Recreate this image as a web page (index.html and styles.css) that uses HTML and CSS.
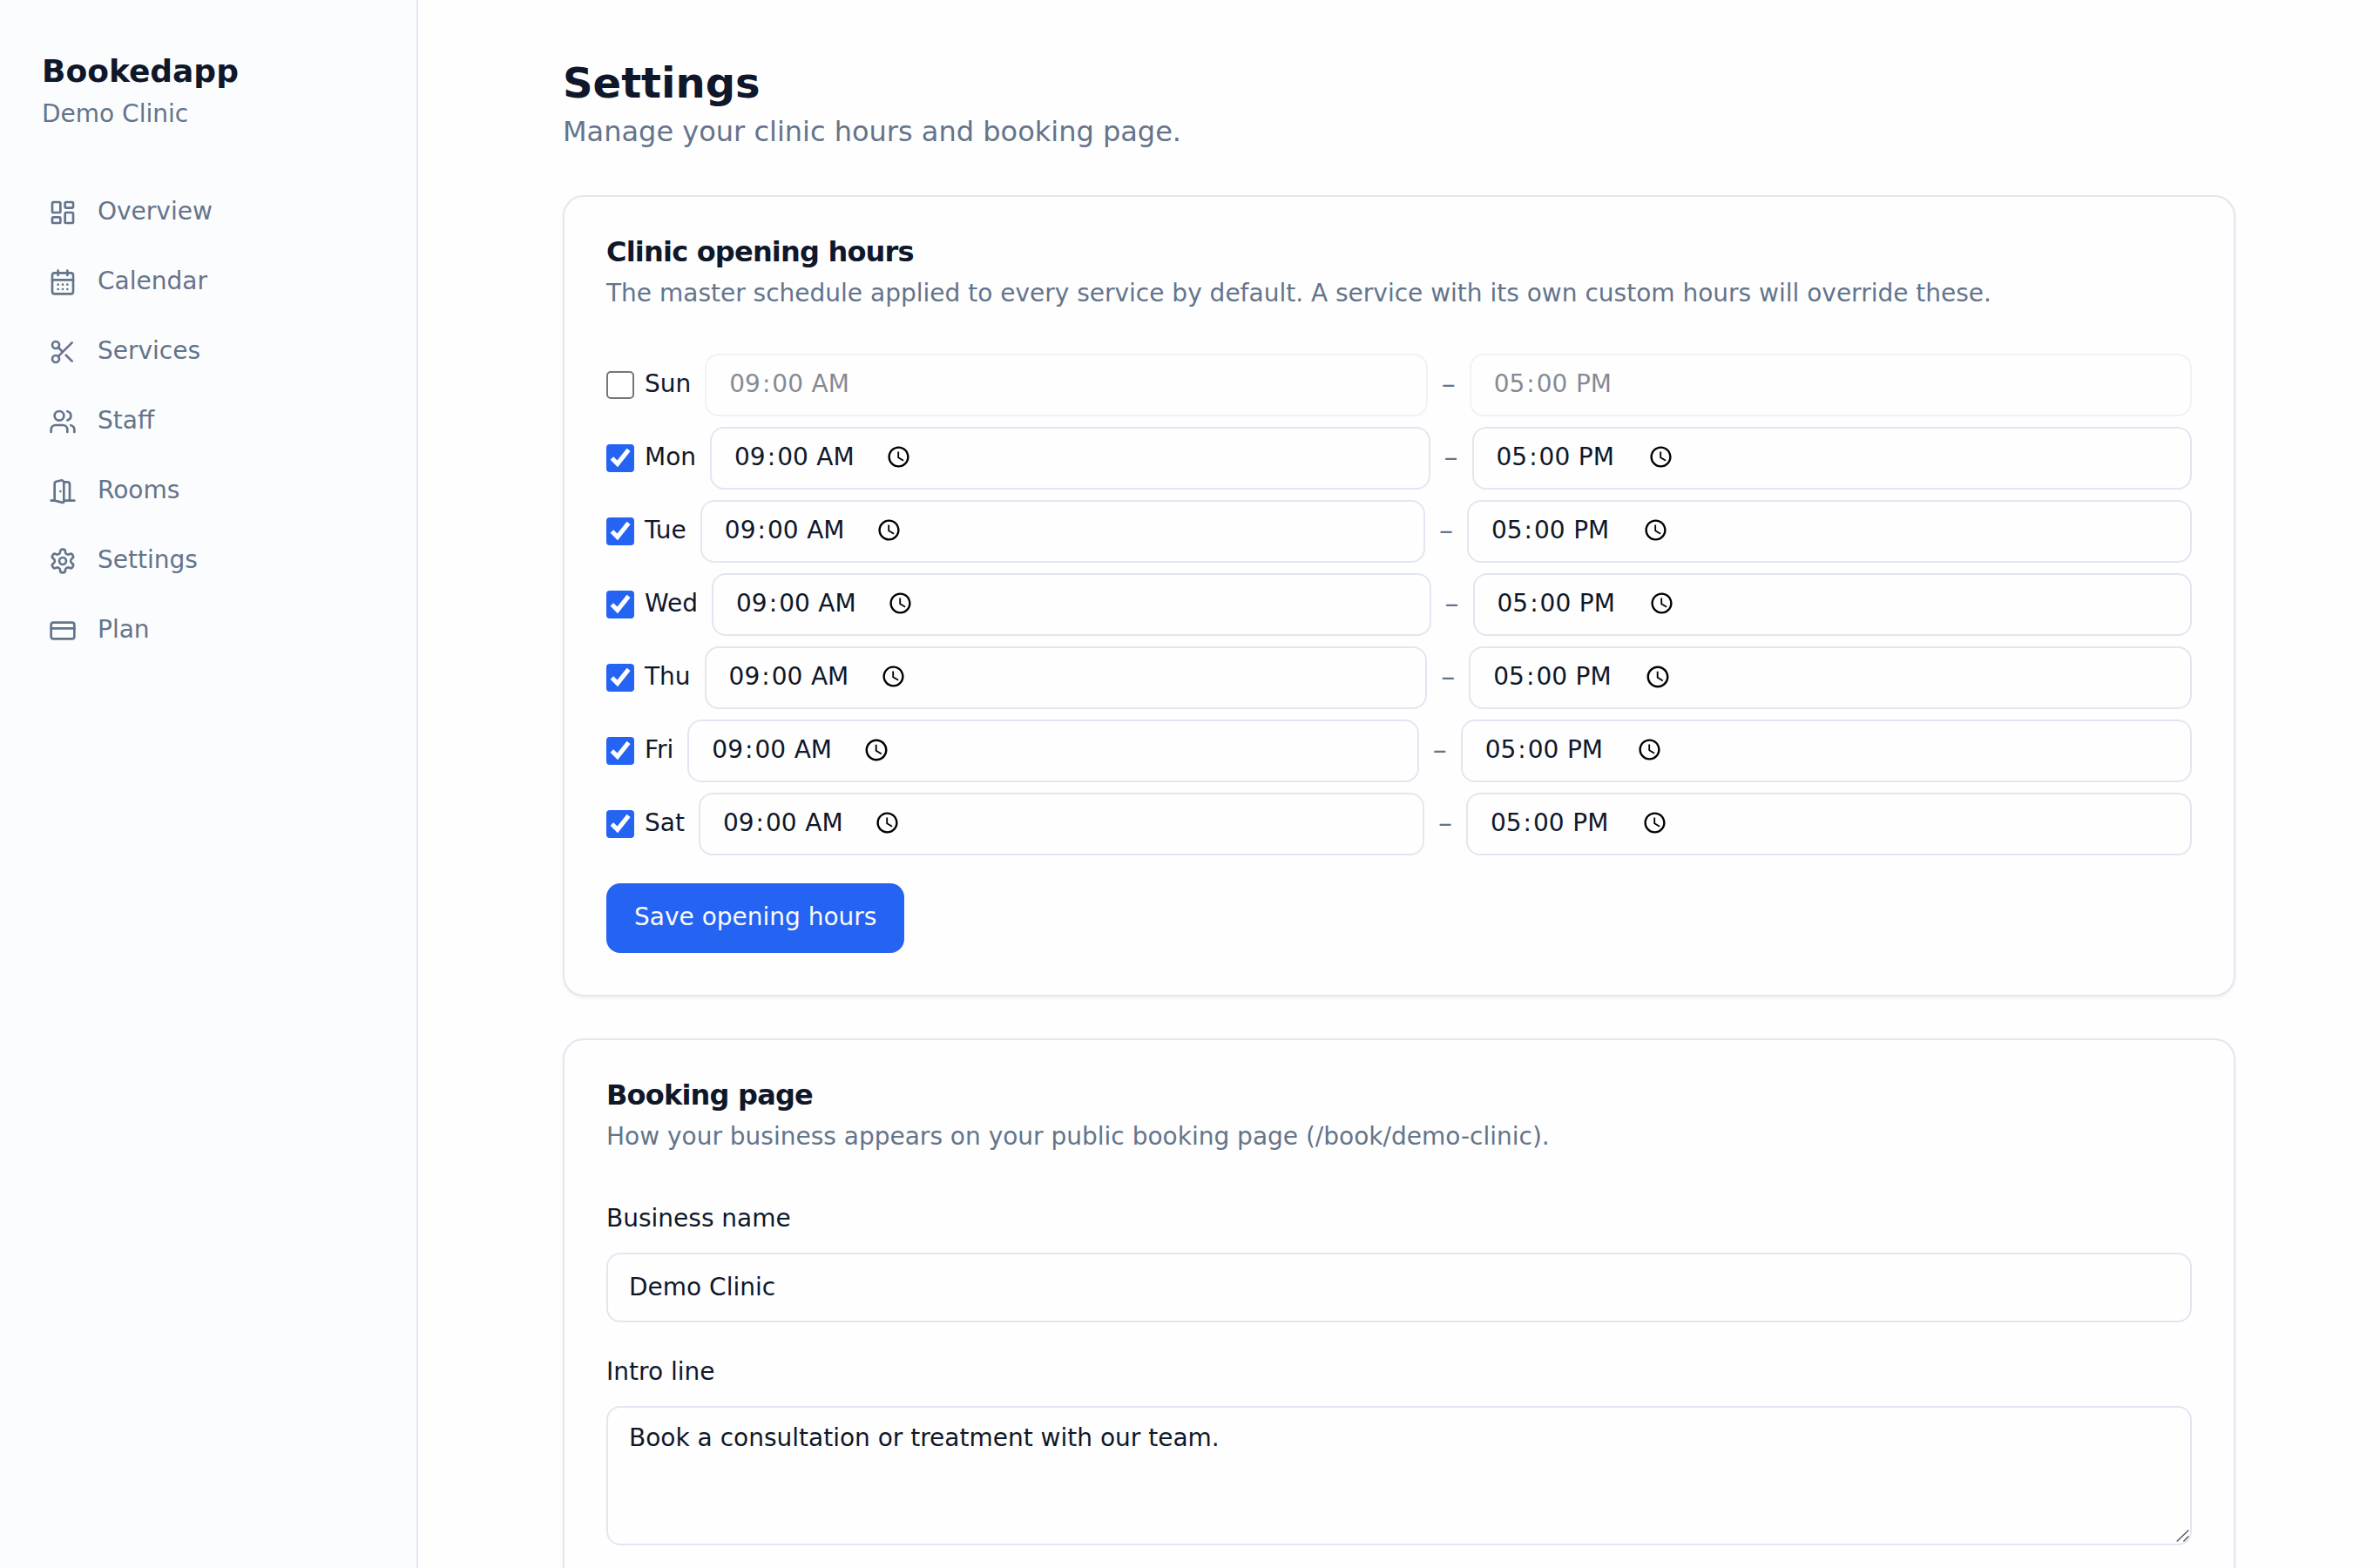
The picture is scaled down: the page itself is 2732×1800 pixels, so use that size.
FILE: index.html
```html
<!DOCTYPE html>
<html lang="en">
<head>
  <meta charset="UTF-8"/>
  <meta name="viewport" content="width=device-width, initial-scale=1.0"/>
  <title>Settings - Bookedapp</title>
  <link rel="stylesheet" href="styles.css">
</head>
<body>
  <aside class="sidebar">
    <div class="brand">
      <div class="brand-name">Bookedapp</div>
      <div class="brand-clinic">Demo Clinic</div>
    </div>
    <nav class="nav">
      <a class="nav-link" href="#">
        <svg class="icon" viewBox="0 0 24 24"><rect width="7" height="9" x="3" y="3" rx="1"/><rect width="7" height="5" x="14" y="3" rx="1"/><rect width="7" height="9" x="14" y="12" rx="1"/><rect width="7" height="5" x="3" y="16" rx="1"/></svg>
        <span>Overview</span>
      </a>
      <a class="nav-link" href="#">
        <svg class="icon" viewBox="0 0 24 24"><path d="M8 2v4M16 2v4"/><rect width="18" height="18" x="3" y="4" rx="2"/><path d="M3 10h18M8 14h.01M12 14h.01M16 14h.01M8 18h.01M12 18h.01M16 18h.01"/></svg>
        <span>Calendar</span>
      </a>
      <a class="nav-link" href="#">
        <svg class="icon" viewBox="0 0 24 24"><circle cx="6" cy="6" r="3"/><path d="M8.12 8.12 12 12M20 4 8.12 15.88"/><circle cx="6" cy="18" r="3"/><path d="M14.8 14.8 20 20"/></svg>
        <span>Services</span>
      </a>
      <a class="nav-link" href="#">
        <svg class="icon" viewBox="0 0 24 24"><path d="M16 21v-2a4 4 0 0 0-4-4H6a4 4 0 0 0-4 4v2"/><circle cx="9" cy="7" r="4"/><path d="M22 21v-2a4 4 0 0 0-3-3.87M16 3.13a4 4 0 0 1 0 7.75"/></svg>
        <span>Staff</span>
      </a>
      <a class="nav-link" href="#">
        <svg class="icon" viewBox="0 0 24 24"><path d="M13 4h3a2 2 0 0 1 2 2v14M2 20h3M13 20h9M10 12v.01"/><path d="M13 4.562v16.157a1 1 0 0 1-1.242.97L5 20V5.562a2 2 0 0 1 1.515-1.94l4-1A2 2 0 0 1 13 4.561Z"/></svg>
        <span>Rooms</span>
      </a>
      <a class="nav-link" href="#">
        <svg class="icon" viewBox="0 0 24 24"><path d="M12.22 2h-.44a2 2 0 0 0-2 2v.18a2 2 0 0 1-1 1.73l-.43.25a2 2 0 0 1-2 0l-.15-.08a2 2 0 0 0-2.73.73l-.22.38a2 2 0 0 0 .73 2.73l.15.1a2 2 0 0 1 1 1.72v.51a2 2 0 0 1-1 1.74l-.15.09a2 2 0 0 0-.73 2.73l.22.38a2 2 0 0 0 2.73.73l.15-.08a2 2 0 0 1 2 0l.43.25a2 2 0 0 1 1 1.73V20a2 2 0 0 0 2 2h.44a2 2 0 0 0 2-2v-.18a2 2 0 0 1 1-1.73l.43-.25a2 2 0 0 1 2 0l.15.08a2 2 0 0 0 2.73-.73l.22-.39a2 2 0 0 0-.73-2.73l-.15-.08a2 2 0 0 1-1-1.74v-.5a2 2 0 0 1 1-1.74l.15-.09a2 2 0 0 0 .73-2.73l-.22-.38a2 2 0 0 0-2.73-.73l-.15.08a2 2 0 0 1-2 0l-.43-.25a2 2 0 0 1-1-1.73V4a2 2 0 0 0-2-2z"/><circle cx="12" cy="12" r="3"/></svg>
        <span>Settings</span>
      </a>
      <a class="nav-link" href="#">
        <svg class="icon" viewBox="0 0 24 24"><rect width="20" height="14" x="2" y="5" rx="2"/><path d="M2 10h20"/></svg>
        <span>Plan</span>
      </a>
    </nav>
  </aside>

  <main>
    <div class="content">
      <div class="page-head">
        <h1>Settings</h1>
        <p>Manage your clinic hours and booking page.</p>
      </div>

      <section class="card">
        <div class="card-head">
          <h2>Clinic opening hours</h2>
          <p>The master schedule applied to every service by default. A service with its own custom hours will override these.</p>
        </div>
        <div class="hours">
          <div class="hours-row">
            <label class="day"><input type="checkbox"><span>Sun</span></label>
            <input class="input time" type="time" value="09:00" disabled>
            <span class="dash">–</span>
            <input class="input time" type="time" value="17:00" disabled>
          </div>
          <div class="hours-row">
            <label class="day"><input type="checkbox" checked><span>Mon</span></label>
            <input class="input time" type="time" value="09:00">
            <span class="dash">–</span>
            <input class="input time" type="time" value="17:00">
          </div>
          <div class="hours-row">
            <label class="day"><input type="checkbox" checked><span>Tue</span></label>
            <input class="input time" type="time" value="09:00">
            <span class="dash">–</span>
            <input class="input time" type="time" value="17:00">
          </div>
          <div class="hours-row">
            <label class="day"><input type="checkbox" checked><span>Wed</span></label>
            <input class="input time" type="time" value="09:00">
            <span class="dash">–</span>
            <input class="input time" type="time" value="17:00">
          </div>
          <div class="hours-row">
            <label class="day"><input type="checkbox" checked><span>Thu</span></label>
            <input class="input time" type="time" value="09:00">
            <span class="dash">–</span>
            <input class="input time" type="time" value="17:00">
          </div>
          <div class="hours-row">
            <label class="day"><input type="checkbox" checked><span>Fri</span></label>
            <input class="input time" type="time" value="09:00">
            <span class="dash">–</span>
            <input class="input time" type="time" value="17:00">
          </div>
          <div class="hours-row">
            <label class="day"><input type="checkbox" checked><span>Sat</span></label>
            <input class="input time" type="time" value="09:00">
            <span class="dash">–</span>
            <input class="input time" type="time" value="17:00">
          </div>
        </div>
        <button class="button" type="button">Save opening hours</button>
      </section>

      <section class="card">
        <div class="card-head">
          <h2>Booking page</h2>
          <p>How your business appears on your public booking page (/book/demo-clinic).</p>
        </div>
        <div class="field">
          <label for="name">Business name</label>
          <input class="input" id="name" type="text" value="Demo Clinic">
        </div>
        <div class="field">
          <label for="intro">Intro line</label>
          <div class="textarea-wrap">
            <textarea class="input" id="intro">Book a consultation or treatment with our team.</textarea>
            <svg class="grip" viewBox="0 0 10 10"><path d="M1.4 7.7 8.2 1.2M5.2 7.7 8.2 4.8"/></svg>
          </div>
        </div>
      </section>
    </div>
  </main>
</body>
</html>
```
FILE: styles.css
```css
:root {
  --bg: #fefefe;
  --sidebar: #fbfcfe;
  --text: #0f172a;
  --muted: #64748b;
  --border: #e1e7f0;
  --primary: #2563f3;
}

* {
  margin: 0;
  padding: 0;
  box-sizing: border-box;
}

html {
  zoom: 2;
}

body {
  display: flex;
  height: 900px;
  overflow: hidden;
  font-family: 'DejaVu Sans', sans-serif;
  font-size: 16px;
  line-height: 24px;
  background: var(--bg);
  color: var(--text);
}

.sidebar {
  flex-shrink: 0;
  width: 240px;
  padding: 28px 16px;
  background: var(--sidebar);
  border-right: 1px solid var(--border);
}

.brand {
  padding: 0 8px;
  margin-bottom: 29px;
}

.brand-name {
  font-size: 18px;
  line-height: 26px;
  padding-bottom: 2px;
  font-weight: 700;
}

.brand-clinic {
  font-size: 14px;
  line-height: 19px;
  color: var(--muted);
}

.nav {
  display: flex;
  flex-direction: column;
  gap: 4px;
}

.nav-link {
  display: flex;
  align-items: center;
  gap: 12px;
  height: 36px;
  padding: 0 12px;
  font-size: 14px;
  line-height: 20px;
  color: var(--muted);
  text-decoration: none;
}

.nav-link span {
  padding-bottom: 1px;
}

.icon {
  width: 16px;
  height: 16px;
  fill: none;
  stroke: currentColor;
  stroke-width: 2;
  stroke-linecap: round;
  stroke-linejoin: round;
}

main {
  flex: 1;
  padding: 32px;
}

.content {
  max-width: 960px;
  margin: 0 auto;
  display: flex;
  flex-direction: column;
  gap: 24px;
}

h1 {
  font-size: 24px;
  line-height: 31px;
  padding-bottom: 1px;
  font-weight: 700;
}

.page-head p {
  line-height: 23px;
  padding-bottom: 1px;
  color: var(--muted);
}

.card {
  padding: 24px;
  background: var(--bg);
  border: 1px solid var(--border);
  border-radius: 12px;
  box-shadow: 0 1px 2px rgba(0, 0, 0, 0.05);
}

.card-head {
  display: flex;
  flex-direction: column;
  gap: 7px;
  margin-bottom: 25px;
}

.card-head h2 {
  font-size: 16px;
  line-height: 15px;
  font-weight: 700;
  letter-spacing: -0.025em;
}

.card-head p {
  font-size: 14px;
  line-height: 19px;
  color: var(--muted);
}

.hours {
  display: flex;
  flex-direction: column;
  gap: 6px;
  margin-bottom: 16px;
}

.hours-row {
  display: flex;
  align-items: center;
  gap: 8px;
}

.day {
  display: flex;
  align-items: center;
  gap: 6px;
  font-size: 14px;
  line-height: 20px;
}

.day span {
  padding-bottom: 1px;
}

.day input {
  width: 16px;
  height: 16px;
  accent-color: var(--primary);
}

.dash {
  padding-bottom: 1px;
  color: var(--muted);
}

.input {
  display: flex;
  width: 100%;
  height: 40px;
  padding: 8px 12px 9px;
  font: 14px/20px 'DejaVu Sans', sans-serif;
  color: var(--text);
  background: var(--bg);
  border: 1px solid var(--border);
  border-radius: 8px;
}

.time {
  height: 36px;
  padding: 4px 12px 5px;
}

.time::-webkit-datetime-edit {
  padding-right: 9px;
}

.input:disabled {
  opacity: 0.5;
}

.textarea-wrap {
  position: relative;
}

textarea.input {
  height: 80px;
  line-height: 19px;
  resize: none;
}

.grip {
  position: absolute;
  right: 0;
  bottom: 0;
  width: 10px;
  height: 10px;
  fill: none;
  stroke: #555;
  stroke-width: 0.7;
}

.button {
  height: 40px;
  padding: 8px 16px 9px;
  font: 14px/20px 'DejaVu Sans', sans-serif;
  color: #f8fafc;
  background: var(--primary);
  border: none;
  border-radius: 8px;
}

.field {
  line-height: 23px;
}

.field label {
  font-size: 14px;
  line-height: 14px;
}

.field .input {
  margin-top: 9px;
}

.field + .field {
  margin-top: 16px;
}
```
